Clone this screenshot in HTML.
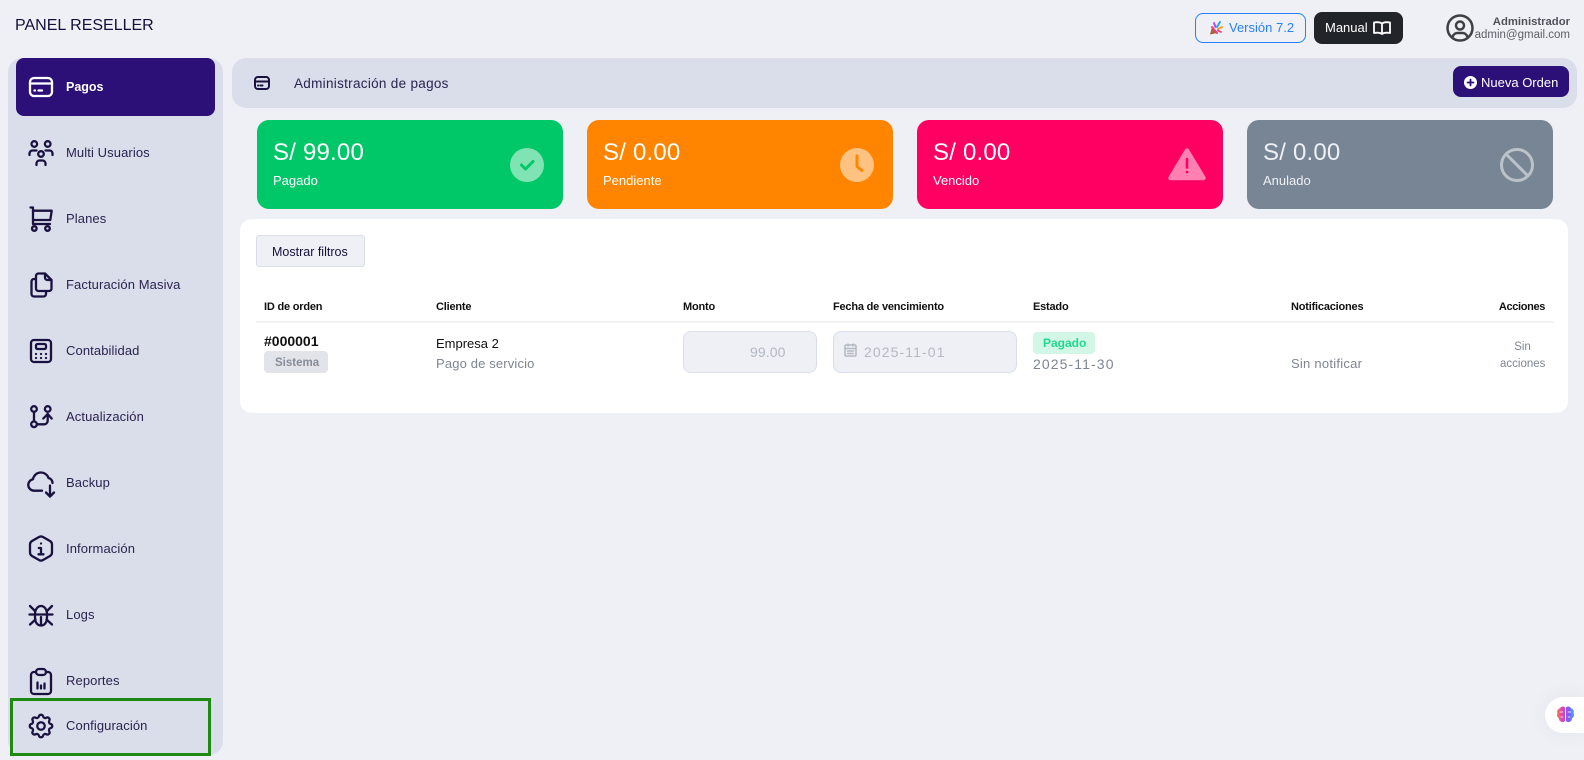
<!DOCTYPE html>
<html lang="es"><head><meta charset="utf-8"><title>Panel Reseller</title>
<style>
html,body{margin:0;padding:0;width:1584px;height:760px;overflow:hidden;background:#eef0f5;font-family:"Liberation Sans",sans-serif;color:#1a1140}
.a{position:absolute}
.t{position:absolute;white-space:nowrap;line-height:20px;height:20px}
svg{position:absolute;fill:none;stroke-linecap:round;stroke-linejoin:round}
.n{left:66px;font-size:13px;color:#2a2350;letter-spacing:.1px}
.i{left:25px;width:32px;height:32px;stroke:#1a1140;stroke-width:2.3}
.c{top:120px;height:89px;border-radius:12px}
.v{left:16px;top:20px;font-size:24px;line-height:26px;height:26px;color:#fff;letter-spacing:.2px}
.l{left:16px;top:51px;font-size:13px;color:#fff}
.h{top:297px;font-size:11px;font-weight:bold;color:#111;letter-spacing:-.2px}
.g{color:#7d8592;font-size:13px;letter-spacing:.15px}
.inp{background:#eef0f5;border:1px solid #d9deea;border-radius:8px;box-sizing:border-box;height:42px;top:331px}
</style></head><body>

<div class="t" style="left:15px;top:16px;font-size:16px;line-height:20px;color:#14103c">PANEL RESELLER</div>

<!-- top right -->
<div class="a" style="left:1195px;top:13px;width:111px;height:30px;box-sizing:border-box;border:1px solid #2680ff;border-radius:8px"></div>
<svg style="left:1209px;top:21px" width="14" height="15" viewBox="0 0 14 15"><path d="M1 13.500L3 6l5 6z" fill="#a5623a"/><path d="M3 6l5 6" stroke="#e8407a" stroke-width="2"/><path d="M5 2l1.500 4" stroke="#b050e0" stroke-width="2"/><path d="M11 1L8 6" stroke="#3aa0f0" stroke-width="2"/><path d="M13 6l-4 2" stroke="#f0a030" stroke-width="2"/><path d="M12 11l-3-1.500" stroke="#e8407a" stroke-width="1.800"/></svg>
<div class="t" style="left:1229px;top:18px;font-size:13px;color:#2680ff">Versión 7.2</div>
<div class="a" style="left:1314px;top:12px;width:89px;height:32px;background:#212529;border-radius:8px"></div>
<div class="t" style="left:1325px;top:18px;font-size:13px;color:#fff">Manual</div>
<svg style="left:1373px;top:21px;stroke:#fff;stroke-width:1.800" width="18" height="15" viewBox="0 0 18 15"><path d="M9 2.500C7 1 4 1 1 1.500V12C4 11.500 7 11.500 9 13C11 11.500 14 11.500 17 12V1.500C14 1 11 1 9 2.500zM9 2.500V13"/></svg>
<svg style="left:1445px;top:13px;stroke:#3f4044;stroke-width:2" width="30" height="30" viewBox="0 0 24 24"><circle cx="12" cy="12" r="10"/><circle cx="12" cy="10" r="3.200"/><path d="M6.200 18.800a4 4 0 0 1 3.800-2.800h4a4 4 0 0 1 3.800 2.800"/></svg>
<div class="t" style="right:14px;top:12px;font-size:11.300px;font-weight:bold;color:#50525a">Administrador</div>
<div class="t" style="right:14px;top:25px;font-size:11.500px;color:#5c5f66">admin@gmail.com</div>

<!-- sidebar -->
<div class="a" style="left:8px;top:58px;width:215px;height:697px;background:#d9deea;border-radius:14px"></div>
<div class="a" style="left:16px;top:58px;width:199px;height:58px;background:#2c1078;border-radius:8px"></div>
<div class="a" style="left:10px;top:698px;width:201px;height:58px;box-sizing:border-box;border:3px solid #1f8a12"></div>

<svg class="i" style="top:71px;stroke:#fff" viewBox="0 0 32 32"><rect x="5" y="7" width="22" height="18" rx="4"/><path d="M5 12.500h22"/><path d="M9.500 19.500h.5"/><path d="M13.500 19.500h3.500"/></svg>
<div class="t n" style="top:77px;color:#fff;font-weight:bold;font-size:12.500px;letter-spacing:0">Pagos</div>

<svg class="i" style="top:137px" viewBox="0 0 32 32"><circle cx="9.300" cy="7" r="2.800"/><circle cx="22.700" cy="7" r="2.800"/><circle cx="16" cy="17" r="2.800"/><path d="M4.500 18v-1.500a3 3 0 0 1 3-3h4"/><path d="M27.500 18v-1.500a3 3 0 0 0-3-3h-4"/><path d="M11.500 28v-1.500a3 3 0 0 1 3-3h3a3 3 0 0 1 3 3V28"/></svg>
<div class="t n" style="top:143px">Multi Usuarios</div>

<svg class="i" style="top:203px" viewBox="0 0 32 32"><path d="M5.500 4.500H8V21h17"/><path d="M8 7.700h18.700L25.300 17H8"/><circle cx="9.300" cy="25.500" r="2.300"/><circle cx="22.500" cy="25.500" r="2.300"/></svg>
<div class="t n" style="top:209px">Planes</div>

<svg class="i" style="top:269px" viewBox="0 0 32 32"><path d="M11 19.500V7a2.500 2.500 0 0 1 2.500-2.500H20l6.500 6.500v8.500a2.500 2.500 0 0 1-2.500 2.500H13.500A2.500 2.500 0 0 1 11 19.500z"/><path d="M20 4.500v4a2.500 2.500 0 0 0 2.500 2.500h4"/><path d="M11 10H9a2.500 2.500 0 0 0-2.500 2.500V25A2.500 2.500 0 0 0 9 27.500h9.500A2.500 2.500 0 0 0 21 25v-3"/></svg>
<div class="t n" style="top:275px">Facturación Masiva</div>

<svg class="i" style="top:335px" viewBox="0 0 32 32"><rect x="6" y="5" width="20" height="22" rx="3"/><rect x="11" y="9" width="10" height="5" rx="1.500"/><path d="M11 19h.01M16 19h.01M21 19h.01M11 23h.01M16 23h.01M21 23h.01"/></svg>
<div class="t n" style="top:341px">Contabilidad</div>

<svg class="i" style="top:401px" viewBox="0 0 32 32"><circle cx="9" cy="8" r="2.800"/><circle cx="9" cy="23.300" r="2.800"/><circle cx="22.700" cy="8" r="2.800"/><path d="M9 11v9.300"/><path d="M12 23.300h7a3.500 3.500 0 0 0 3.700-3.500V13"/><path d="M18.300 17.500l4.400-4.500 4 4.500"/></svg>
<div class="t n" style="top:407px">Actualización</div>

<svg class="i" style="top:467px" viewBox="0 0 32 32"><path d="M17 23.700H9a5.800 5.800 0 0 1-1-11.500A8 8 0 0 1 23.500 11a5 5 0 0 1 4 5"/><path d="M25 18.500v11"/><path d="M21 25.500l4 4 4-4"/></svg>
<div class="t n" style="top:473px">Backup</div>

<svg class="i" style="top:533px" viewBox="0 0 32 32"><path d="M14 4Q16 2.800 18 4L25 8Q27 9.200 27 11.500V19.500Q27 21.800 25 23L18 27Q16 28.200 14 27L7 23Q5 21.800 5 19.500V11.500Q5 9.200 7 8Z"/><path d="M16 10.500h.01"/><path d="M13.800 15H16v6.300M13.500 21.300h5"/></svg>
<div class="t n" style="top:539px">Información</div>

<svg class="i" style="top:599px" viewBox="0 0 32 32"><path d="M10 15.500c0-5 2.500-8.500 6-8.500s6 3.500 6 8.500v3c0 5-2.500 8-6 8s-6-3-6-8z"/><path d="M4.500 15.500h23"/><path d="M16 18v8.500"/><path d="M5 7l5 5M27 7l-5 5M5 25.500l5.500-5M27 25.500l-5.500-5"/></svg>
<div class="t n" style="top:605px">Logs</div>

<svg class="i" style="top:665px" viewBox="0 0 32 32"><path d="M11 7H9a3 3 0 0 0-3 3v16a3 3 0 0 0 3 3h14a3 3 0 0 0 3-3V10a3 3 0 0 0-3-3h-2"/><rect x="11" y="4" width="10" height="6" rx="3"/><path d="M12.500 23.500v-6M16 23.500v-3M19.500 23.500v-5"/></svg>
<div class="t n" style="top:671px">Reportes</div>

<svg class="i" style="top:710px" viewBox="0 0 32 32"><g transform="translate(1 1) scale(1.250)" stroke-width="1.800"><path d="M10.325 4.317c.426-1.756 2.924-1.756 3.350 0a1.724 1.724 0 0 0 2.573 1.066c1.543-.94 3.310.826 2.370 2.370a1.724 1.724 0 0 0 1.065 2.572c1.756.426 1.756 2.924 0 3.350a1.724 1.724 0 0 0-1.066 2.573c.94 1.543-.826 3.310-2.370 2.370a1.724 1.724 0 0 0-2.572 1.065c-.426 1.756-2.924 1.756-3.350 0a1.724 1.724 0 0 0-2.573-1.066c-1.543.94-3.310-.826-2.370-2.370a1.724 1.724 0 0 0-1.065-2.572c-1.756-.426-1.756-2.924 0-3.350a1.724 1.724 0 0 0 1.066-2.573c-.94-1.543.826-3.310 2.370-2.370c1 .608 2.296.07 2.572-1.065z"/><circle cx="12" cy="12" r="3"/></g></svg>
<div class="t n" style="top:716px">Configuración</div>

<!-- title bar -->
<div class="a" style="left:232px;top:58px;width:1345px;height:50px;background:#d9deea;border-radius:14px"></div>
<svg style="left:254px;top:76px;stroke:#1a1140;stroke-width:2" width="16" height="14" viewBox="0 0 16 14"><rect x="1" y="1" width="14" height="12" rx="3"/><path d="M1 5.500h14"/><path d="M4 9.500h.4"/><path d="M6.500 9.500h2"/></svg>
<div class="t" style="left:294px;top:74px;font-size:13.500px;color:#2a2350;letter-spacing:.3px">Administración de pagos</div>
<div class="a" style="left:1453px;top:66px;width:116px;height:31px;background:#2c1078;border-radius:8px"></div>
<svg style="left:1464px;top:76px" width="13" height="13" viewBox="0 0 13 13"><circle cx="6.500" cy="6.500" r="6.500" fill="#fff"/><path d="M6.500 3.500v6M3.500 6.500h6" stroke="#2c1078" stroke-width="1.800"/></svg>
<div class="t" style="left:1481px;top:73px;font-size:13px;color:#fff">Nueva Orden</div>

<!-- cards -->
<div class="a c" style="left:257px;width:306px;background:#00c767">
  <div class="t v">S/ 99.00</div><div class="t l">Pagado</div>
  <svg style="left:253px;top:28px" width="34" height="34" viewBox="0 0 34 34"><circle cx="17" cy="17" r="17" fill="#80e3b3"/><path d="M11.500 17l4 4 7.500-7.500" stroke="#00c767" stroke-width="3"/></svg>
</div>
<div class="a c" style="left:587px;width:306px;background:#ff8500">
  <div class="t v">S/ 0.00</div><div class="t l">Pendiente</div>
  <svg style="left:253px;top:28px" width="34" height="34" viewBox="0 0 34 34"><circle cx="17" cy="17" r="17" fill="#ffc280"/><path d="M17 8v10.500l5 4" stroke="#ff8500" stroke-width="3"/></svg>
</div>
<div class="a c" style="left:917px;width:306px;background:#ff0062">
  <div class="t v">S/ 0.00</div><div class="t l">Vencido</div>
  <svg style="left:251px;top:27px" width="38" height="34" viewBox="0 0 38 34"><path d="M19 3.500L35.500 31H2.500z" fill="#ff80b1" stroke="#ff80b1" stroke-width="4.500"/><path d="M19 12v8.500M19 25v.1" stroke="#ff0062" stroke-width="2.600"/></svg>
</div>
<div class="a c" style="left:1247px;width:306px;background:#778594">
  <div class="t v" style="color:#eef0f5">S/ 0.00</div><div class="t l" style="color:#eef0f5">Anulado</div>
  <svg style="left:253px;top:28px" width="34" height="34" viewBox="0 0 34 34"><circle cx="17" cy="17" r="15.500" stroke="#bbc2ca" stroke-width="3"/><path d="M6.500 6.500l21 21" stroke="#bbc2ca" stroke-width="3"/></svg>
</div>

<!-- panel -->
<div class="a" style="left:240px;top:219px;width:1328px;height:194px;background:#fff;border-radius:12px"></div>
<div class="a" style="left:256px;top:235px;width:109px;height:32px;box-sizing:border-box;background:#eef0f5;border:1px solid #d9deea;border-radius:3px"></div>
<div class="t" style="left:272px;top:241px;font-size:12.500px;color:#14103c;line-height:22px">Mostrar filtros</div>

<div class="t h" style="left:264px">ID de orden</div>
<div class="t h" style="left:436px">Cliente</div>
<div class="t h" style="left:683px">Monto</div>
<div class="t h" style="left:833px">Fecha de vencimiento</div>
<div class="t h" style="left:1033px">Estado</div>
<div class="t h" style="left:1291px">Notificaciones</div>
<div class="t h" style="right:39px;letter-spacing:-.35px">Acciones</div>
<div class="a" style="left:256px;top:321px;width:1298px;height:2px;background:#f1f2f5"></div>

<div class="t" style="left:264px;top:331px;font-size:14px;font-weight:bold;color:#111">#000001</div>
<div class="a" style="left:264px;top:351px;width:64px;height:22px;background:#e2e4ea;border-radius:4px"></div>
<div class="t" style="left:275px;top:353px;font-size:11.500px;font-weight:bold;color:#868c98">Sistema</div>
<div class="t" style="left:436px;top:334px;font-size:13px;color:#111">Empresa 2</div>
<div class="t g" style="left:436px;top:354px">Pago de servicio</div>

<div class="a inp" style="left:683px;width:134px"></div>
<div class="t" style="left:750px;top:342px;font-size:14px;color:#b4b8c2;letter-spacing:.1px">99.00</div>
<div class="a inp" style="left:833px;width:184px"></div>
<svg style="left:844px;top:343px;stroke:#b4b8c2;stroke-width:1.500" width="13" height="14" viewBox="0 0 13 14"><rect x="1" y="2" width="11" height="11" rx="1"/><path d="M1 5.500h11M4 1v2M9 1v2M3.500 8h6M3.500 10.500h6"/></svg>
<div class="t" style="left:864px;top:342px;font-size:14px;color:#b4b8c2;letter-spacing:1.100px">2025-11-01</div>

<div class="a" style="left:1033px;top:332px;width:62px;height:22px;background:#d3f7e7;border-radius:4px"></div>
<div class="t" style="left:1043px;top:333px;font-size:12px;font-weight:bold;color:#1fd98e">Pagado</div>
<div class="t g" style="left:1033px;top:354px;font-size:14px;letter-spacing:1.100px">2025-11-30</div>
<div class="t g" style="left:1291px;top:354px;letter-spacing:.25px">Sin notificar</div>
<div class="t g" style="left:1500px;top:337px;width:45px;text-align:center;font-size:11.500px;letter-spacing:0">Sin</div>
<div class="t g" style="left:1500px;top:354px;width:45px;text-align:center;font-size:11.500px;letter-spacing:0">acciones</div>

<!-- floating brain -->
<div class="a" style="left:1545px;top:697px;width:39px;height:36px;background:#fff;border-radius:18px 0 0 18px;box-shadow:0 0 24px rgba(0,0,0,.05)"></div>
<svg style="left:1556px;top:705px" width="19" height="19" viewBox="0 0 19 19"><defs><linearGradient id="b" x1="0" x2="1" y1="0" y2="0"><stop offset="0" stop-color="#ff7a30"/><stop offset=".35" stop-color="#d040d8"/><stop offset=".7" stop-color="#7a60f0"/><stop offset="1" stop-color="#50a0ff"/></linearGradient></defs><path d="M9 2.500a3 3 0 0 0-5 .8a3.500 3.500 0 0 0-2.500 5a3.500 3.500 0 0 0 1.500 5a3.500 3.500 0 0 0 6 2.700zM10 2.500a3 3 0 0 1 5 .8a3.500 3.500 0 0 1 2.500 5a3.500 3.500 0 0 1-1.500 5a3.500 3.500 0 0 1-6 2.700z" fill="url(#b)"/><path d="M4 7h3M12 7h3M5 12h2M12 12h2" stroke="#fff" stroke-width=".8"/></svg>

</body></html>
